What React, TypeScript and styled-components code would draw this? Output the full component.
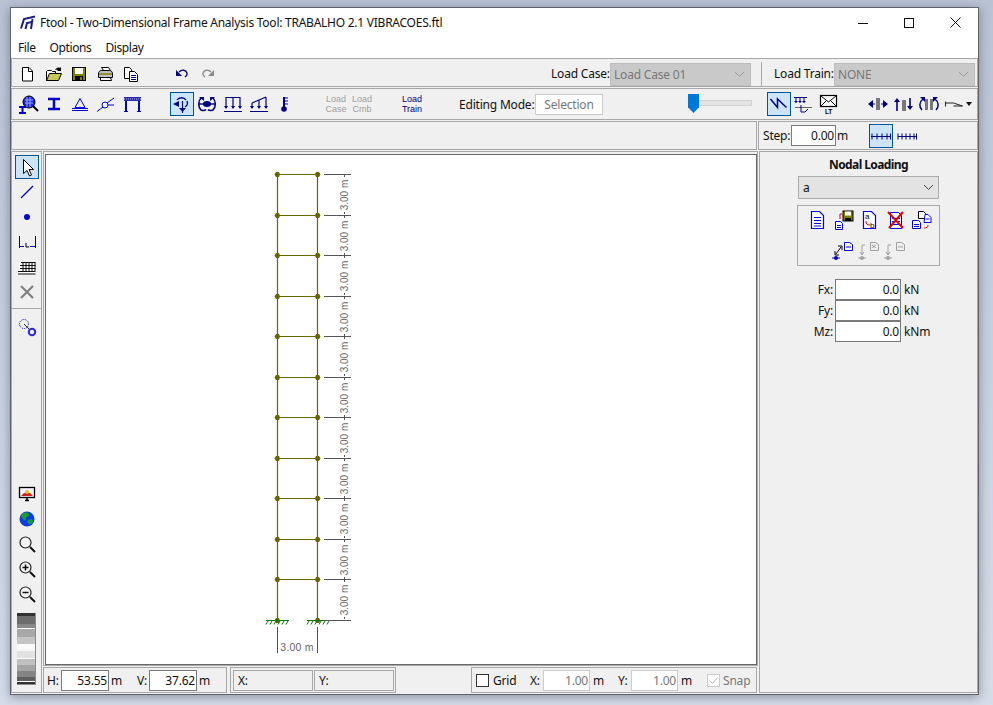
import React from 'react';
import styled, { createGlobalStyle } from 'styled-components';

const NAVY = '#000080';
const BLUE = '#0000e6';
const FRAME = '#666600';
const FLOORS = [174, 215, 255, 296, 336, 377, 417, 458, 498, 539, 579, 620];

const GlobalStyle = createGlobalStyle`
    html, body {
        margin: 0;
        height: 100%;
        background: linear-gradient(#b9c3d4, #d5dde9);
        overflow: hidden;
    }
    body {
        font-family: "Noto Sans", "Open Sans", sans-serif;
        font-size: 12px;
        letter-spacing: -0.2px;
        color: #111;
    }
`;

const WindowFrame = styled.div`
    box-sizing: border-box;
    width: 969px;
    height: 688px;
    margin: 7px 0 0 10px;
    border: 1px solid #5f6368;
    background: #f0f0f0;
    box-shadow: 0 2px 10px rgba(40, 50, 70, 0.45);
    display: flex;
    flex-direction: column;
`;

const TitleBar = styled.div`
    height: 29px;
    background: #fff;
    display: flex;
    align-items: center;
    padding-left: 9px;
    font-size: 12px;
    letter-spacing: -0.25px;
    flex-shrink: 0;
`;

const TitleText = styled.span`
    margin-left: 3px;
    flex: 1;
    white-space: nowrap;
`;

const WinButton = styled.div`
    width: 46px;
    height: 29px;
    display: flex;
    align-items: center;
    justify-content: center;
`;

const MenuBar = styled.div`
    height: 21px;
    background: #fff;
    display: flex;
    align-items: center;
    padding-left: 7px;
    gap: 14px;
    letter-spacing: -0.4px;
    flex-shrink: 0;
`;

const Toolbar = styled.div<{ $h: number; $pt?: number }>`
    box-sizing: border-box;
    height: ${p => p.$h}px;
    margin-bottom: 1px;
    padding-top: ${p => p.$pt ?? 0}px;
    border: 1px solid #a8a8a8;
    display: flex;
    align-items: center;
    flex-shrink: 0;
    white-space: nowrap;
`;

const SplitRow = styled.div`
    display: flex;
    gap: 1px;
    height: 29px;
    margin-bottom: 1px;
    flex-shrink: 0;
`;

const Bar = styled.div<{ $w?: number }>`
    box-sizing: border-box;
    border: 1px solid #a8a8a8;
    display: flex;
    align-items: center;
    ${p => (p.$w ? `width: ${p.$w}px;` : 'flex: 1;')}
`;

const Spacer = styled.div<{ $w: number }>`
    width: ${p => p.$w}px;
    flex-shrink: 0;
`;

const Slot = styled.div<{ $w?: number; $active?: boolean }>`
    box-sizing: border-box;
    width: ${p => p.$w ?? 26}px;
    height: 24px;
    display: flex;
    align-items: center;
    justify-content: center;
    flex-shrink: 0;
    ${p => p.$active && 'background: #cce4f7; border: 1px solid #005499;'}
`;

const Ico = styled.svg.attrs({ viewBox: '0 0 24 24', width: 24, height: 24 })`
    display: block;
    flex-shrink: 0;
    fill: none;
`;

const Label = styled.span<{ $w?: number; $color?: string }>`
    display: inline-block;
    flex-shrink: 0;
    color: ${p => p.$color ?? '#111'};
    ${p => p.$w && `width: ${p.$w}px;`}
`;

const Combo = styled.div`
    box-sizing: border-box;
    width: 141px;
    height: 23px;
    margin-top: 1px;
    background: #c9c9c9;
    border: 1px solid #bdbdbd;
    color: #777;
    display: flex;
    align-items: center;
    justify-content: space-between;
    padding: 0 5px 0 3px;
    flex-shrink: 0;
`;

const VRule = styled.div`
    width: 1px;
    height: 24px;
    background: #a8a8a8;
    flex-shrink: 0;
`;

const SmallCaption = styled.div<{ $on?: boolean }>`
    width: 26px;
    font-family: "Liberation Sans", sans-serif;
    font-size: 9px;
    line-height: 10px;
    letter-spacing: 0;
    text-align: center;
    white-space: normal;
    flex-shrink: 0;
    color: ${p => (p.$on ? NAVY : '#a0a0a0')};
`;

const ModeButton = styled.div`
    box-sizing: border-box;
    width: 68px;
    height: 21px;
    border: 1px solid #ccc;
    background: #fff;
    color: #777;
    display: flex;
    align-items: center;
    justify-content: center;
    flex-shrink: 0;
`;

const Slider = styled.div`
    position: relative;
    width: 64px;
    height: 20px;
    flex-shrink: 0;
`;

const SliderTrack = styled.div`
    position: absolute;
    left: 0;
    right: 0;
    top: 6px;
    height: 4px;
    background: #e3e3e3;
    border: 1px solid #d2d2d2;
`;

const SliderThumb = styled.div`
    position: absolute;
    left: 0;
    top: 0;
    width: 11px;
    height: 19px;
    background: #0078d7;
    clip-path: polygon(0 0, 100% 0, 100% 70%, 50% 100%, 0 70%);
`;

const Field = styled.div<{ $w: number; $off?: boolean }>`
    box-sizing: border-box;
    width: ${p => p.$w}px;
    height: 21px;
    background: #fff;
    border: 1px solid ${p => (p.$off ? '#ccc' : '#7a7a7a')};
    color: ${p => (p.$off ? '#777' : '#111')};
    display: flex;
    align-items: center;
    justify-content: flex-end;
    padding-right: 1px;
    flex-shrink: 0;
`;

const Main = styled.div`
    display: flex;
    gap: 1px;
    height: 542px;
    flex-shrink: 0;
`;

const LeftPanel = styled.div`
    box-sizing: border-box;
    width: 31px;
    border: 1px solid #a8a8a8;
    padding: 3px 2px 7px 3px;
    display: flex;
    flex-direction: column;
    gap: 1px;
`;

const ToolRule = styled.div`
    height: 1px;
    background: #a8a8a8;
    margin: 3px -2px 6px -3px;
`;

const BottomTools = styled.div`
    margin-top: auto;
    display: flex;
    flex-direction: column;
    gap: 1px;
`;

const GrayScale = styled.div`
    box-sizing: border-box;
    width: 19px;
    height: 72px;
    margin: 6px 0 0 2px;
    border-right: 1px solid #8a8a8a;
    border-bottom: 1px solid #8a8a8a;
    background: linear-gradient(
        #333 0 3px, #6d6d6d 3px 11px, #868686 11px 12px, #8a8a8a 12px 15px, #fff 15px 16px,
        #a8a8a8 16px 24px, #c4c4c4 24px 31px, #fafafa 31px 36px, #f6f6f6 36px 38px, #e2e2e2 38px 45px,
        #fff 45px 46px, #c0c0c0 46px 52px, #a4a4a4 52px 58px, #848484 58px 64px, #606060 64px 68px,
        #fff 68px 69px, #333 69px 72px
    );
`;

const CenterColumn = styled.div`
    width: 715px;
    display: flex;
    flex-direction: column;
    gap: 1px;
    flex-shrink: 0;
`;

const CanvasPanel = styled.div`
    box-sizing: border-box;
    height: 515px;
    border: 1px solid #a8a8a8;
    padding: 2px 0 0 1px;
    flex-shrink: 0;
`;

const Canvas = styled.div`
    box-sizing: border-box;
    width: 712px;
    height: 511px;
    border: 1px solid #696969;
    background: #fff;
    overflow: hidden;
`;

const StatusRow = styled.div`
    display: flex;
    height: 26px;
`;

const StatusPanel = styled.div<{ $w: number; $ml?: number }>`
    box-sizing: border-box;
    width: ${p => p.$w}px;
    margin-left: ${p => p.$ml ?? 0}px;
    border: 1px solid #a8a8a8;
    display: flex;
    align-items: center;
    flex-shrink: 0;
    white-space: nowrap;
`;

const Readout = styled.div`
    box-sizing: border-box;
    width: 80px;
    height: 21px;
    border: 1px solid #a8a8a8;
    padding-left: 4px;
    display: flex;
    align-items: center;
    flex-shrink: 0;
`;

const CheckBox = styled.div<{ $off?: boolean }>`
    box-sizing: border-box;
    width: 13px;
    height: 13px;
    background: #fff;
    border: 1px solid ${p => (p.$off ? '#ccc' : '#333')};
    display: flex;
    align-items: center;
    justify-content: center;
    flex-shrink: 0;
`;

const RightPanel = styled.div`
    box-sizing: border-box;
    width: 219px;
    border: 1px solid #a8a8a8;
    display: flex;
    flex-direction: column;
    padding: 4px 0 0 37px;
    flex-shrink: 0;
`;

const PanelTitle = styled.div`
    width: 143px;
    text-align: center;
    font-weight: 700;
    letter-spacing: -0.6px;
    line-height: 17px;
`;

const Select = styled.div`
    box-sizing: border-box;
    width: 141px;
    height: 23px;
    margin: 3px 0 0 1px;
    background: #e3e3e3;
    border: 1px solid #acacac;
    display: flex;
    align-items: center;
    justify-content: space-between;
    padding: 0 4px;
`;

const IconGroup = styled.div`
    box-sizing: border-box;
    width: 143px;
    height: 61px;
    margin-top: 6px;
    border: 1px solid #a8a8a8;
    padding: 2px 0 0 6px;
    display: flex;
    flex-direction: column;
    gap: 6px;
`;

const IconRow = styled.div<{ $pad?: number }>`
    display: flex;
    padding-left: ${p => p.$pad ?? 0}px;
`;

const FieldRow = styled.div`
    display: flex;
    align-items: center;
    height: 21px;
`;

const FieldLabel = styled.span`
    width: 38px;
    text-align: right;
    padding-right: 2px;
    box-sizing: border-box;
    flex-shrink: 0;
`;

const FieldGroup = styled.div`
    margin-top: 13px;
`;

const Unit = styled.span`
    margin-left: 3px;
`;

const DimText = styled.text<{ $small?: boolean }>`
    font-family: "Liberation Sans", sans-serif;
    font-size: ${p => (p.$small ? 10 : 10.5)}px;
    letter-spacing: ${p => (p.$small ? 0 : 0.2)}px;
    fill: #666;
    text-anchor: middle;
`;

const Chevron = ({ color }: { color: string }) => (
    <svg width="11" height="7" viewBox="0 0 11 7" fill="none">
        <path d="M1 1l4.5 4.5L10 1" stroke={color} />
    </svg>
);

const Logo = () => (
    <svg width="17" height="15" viewBox="0 0 17 15" fill="none">
        <path d="M1 13.500L4 4 15 1.500" stroke="#1c1c80" strokeWidth="2" />
        <path d="M5.500 14L7 8l6-1.200M11 14L12.500 4" stroke="#1c1c80" strokeWidth="2" />
    </svg>
);

const Icons: Record<string, React.ReactNode> = {
    newDoc: <><path d="M7.5 5.5h6.5l3.5 3.5v10h-10z" fill="#fff" stroke="#000" /><path d="M13.5 5.5v4h4" stroke="#000" /></>,
    open: <><path d="M5.5 18.5v-9l1-1h4l1 1h3v2" fill="#fff" stroke="#000" /><path d="M5.5 18.5l3-7h12l-3 7z" fill="#c8c85a" stroke="#000" /><path d="M14 8c1-2 3-3 5-2l1-1v4h-4l1-1c-1-.5-2 0-3 0z" fill="#000" /></>,
    save: <><rect x="5.5" y="5.5" width="13" height="13" fill="#808000" stroke="#000" /><rect x="8" y="6" width="8" height="6" fill="#fff" /><rect x="8" y="14" width="8" height="5" fill="#000" /><rect x="13" y="15" width="2" height="3" fill="#808000" /></>,
    print: <><path d="M8.5 5.5h7l2 3h-7z" fill="#fff" stroke="#000" /><path d="M5.5 12c0-2 1-3.5 3-3.5h8c2 0 3 1.500 3 3.500v3.500h-14z" fill="#c0c0c0" stroke="#000" /><path d="M6 12h13" stroke="#808000" strokeWidth="1.5" /><path d="M7.500 15.500h10l1 3h-11z" fill="#fff" stroke="#000" /></>,
    copy: <><path d="M5.500 5.500h5l2 2v9h-7z" fill="#fff" stroke="#000" /><path d="M10.500 9.500h5l3 3v7h-8z" fill="#fff" stroke="#000" /><path d="M12 13.500h5M12 15.500h5M12 17.500h5" stroke="#000080" /></>,
    undo: <><path d="M6 8v6h6z" fill="#000080" /><path d="M9 10c3-3 7-2 8 1 .500 2-.500 3-2 4" stroke="#000080" strokeWidth="1.300" /></>,
    redo: <><path d="M18 8v6h-6z" fill="#8a8a8a" /><path d="M15 10c-3-3-7-2-8 1-.500 2 .500 3 2 4" stroke="#8a8a8a" strokeWidth="1.300" /></>,
    section: <><circle cx="13" cy="10" r="6" fill="#2020e0" stroke="#000" /><path d="M9 8h8M9 11h8M11 5v10M14 5v10" stroke="#9ab0ff" /><path d="M17 14l5 5" stroke="#000" strokeWidth="2" /><path d="M3 15h7M3 21h7M6.500 15v6" stroke="#0000c0" strokeWidth="2" /></>,
    beam: <path d="M6 7h12M6 17h12M12 7v10" stroke="#0000c0" strokeWidth="2.500" />,
    support: <><path d="M12 6.500L7 15.500h10z" stroke={BLUE} /><path d="M4 16.500h16M4 18.500h16" stroke={BLUE} /></>,
    hinge: <><circle cx="11" cy="13" r="3" stroke="#0000c0" /><path d="M3 19.500l6-4.500M13 11l7-5M14 13h6" stroke={BLUE} /></>,
    frame: <><rect x="4" y="5" width="17" height="4" fill="#2a2ab0" /><path d="M4 7h17" stroke="#c0c0f0" strokeDasharray="1 1" /><path d="M6 9v10M19 9v10" stroke="#0000c0" strokeWidth="2" /><path d="M4 19.500h4M17 19.500h4" stroke={BLUE} /></>,
    nodal: <><path d="M7 8c2-3 7-3 9 0M17 9c1 3 0 5-2 6" stroke={NAVY} strokeWidth="1.300" /><path d="M12.500 9v12" stroke={NAVY} strokeWidth="1.200" /><path d="M3 12l6-3v6z" fill={NAVY} /><path d="M9 16h7l-3.500 4z" fill={NAVY} /></>,
    moment: <><ellipse cx="12" cy="12" rx="4" ry="3" fill={NAVY} /><path d="M3 12h18" stroke={NAVY} strokeWidth="1.400" /><path d="M6 6c-3 3-3 9 0 12 3 1 4 .5 5-.5M18 6c3 3 3 9 0 12-3 1-4 .5-5-.5" stroke={NAVY} strokeWidth="1.600" /><path d="M4 5h5v4zM20 5h-5v4z" fill={NAVY} /></>,
    distLoad: <><path d="M5 5.500h14M5 5v11M12 5v11M19 5v11" stroke={NAVY} strokeWidth="1.200" /><path d="M3 14h4l-2 3zM10 14h4l-2 3zM17 14h4l-2 3z" fill={NAVY} /><path d="M3 19.500h18" stroke={NAVY} /></>,
    linLoad: <><path d="M5 11l14-6M5 11v5M12 8v8M19 5v11" stroke={NAVY} strokeWidth="1.200" /><path d="M3 14h4l-2 3zM10 14h4l-2 3zM17 14h4l-2 3z" fill={NAVY} /><path d="M3 19.500h18" stroke={NAVY} /></>,
    thermo: <><path d="M11 5v10" stroke={NAVY} strokeWidth="2" /><path d="M12 6h3M12 9h3M12 12h3" stroke={NAVY} /><circle cx="11" cy="17" r="2.800" fill={NAVY} /></>,
    zigzag: <path d="M3.500 7l7 8.500V7l9 8.500" stroke={NAVY} strokeWidth="1.500" />,
    diagram: <><path d="M3 5.500h13M5 5.500v5M9 5.500v5M13 5.500v5" stroke={NAVY} /><path d="M3 9h4l-2 2zM7 9h4l-2 2zM11 9h4l-2 2z" fill={NAVY} /><path d="M4 15.500h17" stroke="#666" /><path d="M10 13v7h4l3-3" stroke={NAVY} /></>,
    mail: <><rect x="4.500" y="3.500" width="16" height="11" fill="#fff" stroke="#000" strokeWidth="1.200" /><path d="M5 4l7.500 6L20 4M5 14l5-5M20 14l-5-5" stroke="#000" /><text x="12.500" y="21.500" textAnchor="middle" fontFamily="Liberation Sans" fontWeight="700" fontSize="6.500" fill="#000">LT</text></>,
    moveH: <><rect x="10" y="6" width="4" height="12" fill="#777" /><path d="M2 12l5-4v8zM22 12l-5-4v8z" fill={NAVY} /><path d="M6 12h3M15 12h3" stroke={NAVY} /></>,
    moveV: <><rect x="10" y="8" width="4" height="11" fill="#777" /><path d="M5 6l-3 4h6zM18 18l-3-4h6z" fill={NAVY} /><path d="M5 9v10M18 6v9" stroke={NAVY} strokeWidth="1.600" /></>,
    rotate: <><rect x="8" y="7" width="3" height="11" fill="#777" /><rect x="13" y="7" width="3" height="11" fill="#777" /><path d="M6 7c-4 3-4 8-1 11M18 7c4 3 4 8 1 11" stroke={NAVY} strokeWidth="1.500" /><path d="M3 5h5v5zM21 5h-5v5z" fill={NAVY} /></>,
    hingeMenu: <><path d="M2.500 9.500v5M2.500 11h8l9 3h-9" stroke="#222" /></>,
    step: <path d="M1 12.500h20M2 9.500v6M7 9.500v6M12 9.500v6M17 9.500v6M20.500 9.500v6" stroke={NAVY} transform="translate(1 0)" />,
    stepAlt: <path d="M3 12.500h18M3 9.500v6M7 9.500v6M11 9.500v6M15 9.500v6M19 9.500v6M21.500 9.500v6" stroke={NAVY} />,
    cursor: <path d="M8.500 4.500v14l3.500-3 2.500 5.500 2-1-2.500-5.500h4.500z" fill="#fff" stroke="#000" />,
    line: <path d="M6 18L18 6" stroke="#0000c0" strokeWidth="1.200" />,
    node: <circle cx="12" cy="12" r="3" fill="#0000d0" />,
    dimension: <><path d="M4.500 6v12M20.500 6v12M4 16.500h5M15 16.500h6" stroke="#0000c0" /><path d="M11 13v4h3" stroke="#000" /></>,
    keyboard: <><path d="M4 8h16v10H4z" fill="#fff" /><path d="M6 7.500h14.500M5 10.500h15.500M5 13.500h15.500M3 16.500h17.500M3 19h17.500" stroke="#111" strokeWidth="1.200" /><path d="M8 7v9M11 7v9M14 7v9M17 7v9M20 7v9" stroke="#111" /></>,
    cross: <path d="M6 6l12 12M18 6L6 18" stroke="#808080" strokeWidth="2.200" />,
    probe: <><circle cx="9" cy="8" r="4.500" stroke="#0000c0" strokeDasharray="1 1" /><path d="M9 8l6 6" stroke="#222" /><circle cx="17" cy="16" r="3.200" stroke="#2a2ad0" strokeWidth="2" /></>,
    monitor: <><rect x="4.500" y="5.500" width="15" height="10" fill="#f4f4ff" stroke="#000" strokeWidth="1.300" /><path d="M6 14l3-3h6l3 3z" fill="#d02020" /><circle cx="12" cy="10" r="2" fill="#f0c020" /><path d="M10 18.500h4M12 16v2" stroke="#000" strokeWidth="1.500" /></>,
    globe: <><circle cx="12" cy="12" r="7.500" fill="#0a3ee0" /><path d="M7 7c3-2 7-2 7 1 0 2-4 1-3 4s-3 1-5-2zM13 13c3-1 5-1 5 1s-2 4-4 3-2-3-1-4z" fill="#1d9a2e" /></>,
    zoom: <><circle cx="10.500" cy="10.500" r="5.500" fill="#f4f4f4" stroke="#222" strokeWidth="1.200" /><path d="M15 15l5 5" stroke="#111" strokeWidth="2" /></>,
    zoomIn: <><circle cx="10.500" cy="10.500" r="5.500" fill="#f4f4f4" stroke="#222" strokeWidth="1.200" /><path d="M15 15l5 5" stroke="#111" strokeWidth="2" /><path d="M7.500 10.500h6M10.500 7.500v6" stroke="#111" strokeWidth="1.500" /></>,
    zoomOut: <><circle cx="10.500" cy="10.500" r="5.500" fill="#f4f4f4" stroke="#222" strokeWidth="1.200" /><path d="M15 15l5 5" stroke="#111" strokeWidth="2" /><path d="M7.500 10.500h6" stroke="#111" strokeWidth="1.500" /></>,
    page: <><path d="M6.500 3.500h8l4 4v13h-12z" fill="#fff" stroke="#0000e0" strokeWidth="1.200" /><path d="M9 9.500h7M9 12.500h7M9 15.500h7M9 18h7" stroke="#0000e0" /></>,
    pageSave: <><rect x="12" y="3" width="10" height="10" fill="#808000" stroke="#000" /><rect x="14" y="3.500" width="6" height="4" fill="#fff" /><rect x="14" y="10" width="6" height="3" fill="#000" /><path d="M4.500 13.500h5l2 2v6h-7z" fill="#fff" stroke="#0000e0" /><path d="M6 17.500h4M6 19.500h4" stroke="#0000e0" /><path d="M9 11V6h2" stroke="#e00000" /></>,
    pageRename: <><path d="M6.500 3.500h8l4 4v13h-12z" fill="#fff" stroke="#0000e0" strokeWidth="1.200" /><text x="8" y="11" fontFamily="Liberation Sans" fontSize="8" fill="#000">a</text><text x="13" y="20" fontFamily="Liberation Sans" fontSize="8" fill="#000">b</text><path d="M9 13c0 3 1 4 4 4" stroke="#e00000" /></>,
    pageDelete: <><path d="M7.500 4.500h8l3 3v13h-11z" fill="#fff" stroke="#0000e0" /><path d="M9 10.500h8M9 13.500h8M9 16.500h8" stroke="#0000e0" /><path d="M5 4l15 16M20 4L6 20" stroke="#e00000" strokeWidth="2" /></>,
    pageCopy: <><path d="M9.500 3.500h5l2 2v5h-7z" fill="#fff" stroke="#000" /><path d="M16 6.500h3l3 3v5h-7z" fill="#fff" stroke="#0000e0" /><path d="M3.500 12.500h6l2 2v6h-8z" fill="#fff" stroke="#0000e0" /><path d="M5 16.500h5M5 18.500h5M16.500 11h4" stroke="#0000e0" /><path d="M19 17c0 2-1 3-4 3" stroke="#e00000" /></>,
    apply: <><path d="M13.500 4.500h5l3 2v6h-8z" fill="#fff" stroke="#0000e0" /><path d="M15 9h5" stroke="#0000e0" /><path d="M5 16l5-7M4 13v4h4M7 8h4v4" stroke="#000" /><circle cx="5" cy="20" r="2" fill="#0000c0" /><path d="M1 20h8" stroke="#0000c0" /></>,
    applyOff: <><path d="M13.500 4.500h5l3 2v6h-8z" fill="#f0f0f0" stroke="#a0a0a0" /><path d="M15 7l4 3M19 7l-4 3" stroke="#a0a0a0" /><path d="M8 7h-3v10" stroke="#a0a0a0" /><path d="M3 14l2 3 2-3" stroke="#a0a0a0" /><circle cx="5" cy="20" r="2" fill="#a0a0a0" /><path d="M1 20h8" stroke="#a0a0a0" /></>,
    pasteOff: <><path d="M13.500 4.500h5l3 2v6h-8z" fill="#f0f0f0" stroke="#a0a0a0" /><path d="M15 9h5" stroke="#a0a0a0" /><path d="M8 7h-3v10" stroke="#a0a0a0" /><path d="M3 14l2 3 2-3" stroke="#a0a0a0" /><circle cx="5" cy="20" r="2" fill="#a0a0a0" /><path d="M1 20h8" stroke="#a0a0a0" /></>,
};

const Tool = ({ name, w, active }: { name: string; w?: number; active?: boolean }) => (
    <Slot $w={w} $active={active}>
        <Ico>{Icons[name]}</Ico>
    </Slot>
);

const StructureDrawing = () => (
    <svg width="710" height="509" viewBox="46 155 710 509">
        {/* columns and beams */}
        <g stroke={FRAME} strokeWidth="1.200" fill="none">
            <path d="M277.500 174V620M317.500 174V620" />
            {FLOORS.slice(0, -1).map(y => <path key={y} d={`M277.500 ${y + 0.5}H317.500`} />)}
        </g>
        <g fill={FRAME}>
            {FLOORS.map(y => (
                <g key={y}>
                    <path d={`M274.500 ${y + 0.5}l1.500-2.500h3l1 2.500-1 2.500h-3z`} />
                    <path d={`M315 ${y + 0.5}l1-2.500h3l1.500 2.500-1.500 2.500h-3z`} />
                </g>
            ))}
        </g>
        {/* supports */}
        <g stroke="#0a7a0a" fill="none">
            <path d="M266 620.500h23M307 620.500h22" />
            {[268, 272, 276, 280, 284, 288, 309, 313, 317, 321, 325, 329].map(x => (
                <path key={x} d={`M${x} 621l-2 3.500`} />
            ))}
        </g>
        {/* vertical dimension */}
        <g stroke="#555" fill="none">
            {FLOORS.map(y => <path key={y} d={`M324 ${y + 0.5}H351`} />)}
            {FLOORS.slice(0, -1).map(y => <path key={y} d={`M344.500 ${y}v3M344.500 ${y + 38}v2`} />)}
        </g>
        {FLOORS.slice(0, -1).map(y => (
            <DimText key={y} $small transform={`translate(347.500 ${y + 21}) rotate(-90)`}>3.00 m</DimText>
        ))}
        {/* horizontal dimension */}
        <path d="M277.500 627v26M317.500 627v26" stroke="#555" fill="none" />
        <DimText x="297" y="651">3.00 m</DimText>
    </svg>
);

const App: React.FC = () => (
    <>
        <GlobalStyle />
        <WindowFrame>
            <TitleBar>
                <Logo />
                <TitleText>Ftool - Two-Dimensional Frame Analysis Tool: TRABALHO 2.1 VIBRACOES.ftl</TitleText>
                <WinButton>
                    <svg width="10" height="10"><path d="M0 5.500h10" stroke="#111" /></svg>
                </WinButton>
                <WinButton>
                    <svg width="10" height="10"><rect x="0.500" y="0.500" width="9" height="9" fill="none" stroke="#111" /></svg>
                </WinButton>
                <WinButton>
                    <svg width="11" height="11"><path d="M0.500 0.500l10 10M10.500 0.500l-10 10" stroke="#111" /></svg>
                </WinButton>
            </TitleBar>
            <MenuBar>
                <span>File</span>
                <span>Options</span>
                <span>Display</span>
            </MenuBar>

            <Toolbar $h={29} $pt={2}>
                <Spacer $w={2} />
                <Tool name="newDoc" />
                <Tool name="open" />
                <Tool name="save" />
                <Tool name="print" />
                <Tool name="copy" />
                <Spacer $w={25} />
                <Tool name="undo" />
                <Tool name="redo" />
                <Spacer $w={330} />
                <Label $w={59}>Load Case:</Label>
                <Combo>
                    Load Case 01
                    <Chevron color="#9a9a9a" />
                </Combo>
                <Spacer $w={10} />
                <VRule />
                <Spacer $w={12} />
                <Label $w={60}>Load Train:</Label>
                <Combo>
                    NONE
                    <Chevron color="#9a9a9a" />
                </Combo>
            </Toolbar>

            <Toolbar $h={32}>
                <Spacer $w={3} />
                <Tool name="section" />
                <Tool name="beam" />
                <Tool name="support" />
                <Tool name="hinge" />
                <Tool name="frame" />
                <Spacer $w={25} />
                <Tool name="nodal" w={24} active />
                <Tool name="moment" />
                <Tool name="distLoad" />
                <Tool name="linLoad" />
                <Tool name="thermo" />
                <Spacer $w={25} />
                <SmallCaption>Load Case</SmallCaption>
                <SmallCaption>Load Cmb</SmallCaption>
                <Spacer $w={24} />
                <SmallCaption $on>Load Train</SmallCaption>
                <Spacer $w={34} />
                <Label $w={76}>Editing Mode:</Label>
                <ModeButton>Selection</ModeButton>
                <Spacer $w={85} />
                <Slider>
                    <SliderTrack />
                    <SliderThumb />
                </Slider>
                <Spacer $w={15} />
                <Tool name="zigzag" w={24} active />
                <Tool name="diagram" w={24} />
                <Tool name="mail" />
                <Spacer $w={24} />
                <Tool name="moveH" />
                <Tool name="moveV" w={25} />
                <Tool name="rotate" w={25} />
                <Spacer $w={3} />
                <Tool name="hingeMenu" w={22} />
                <svg width="6" height="4" viewBox="0 0 6 4"><path d="M0 0h6L3 4z" fill="#111" /></svg>
            </Toolbar>

            <SplitRow>
                <Bar />
                <Bar $w={220}>
                    <Spacer $w={4} />
                    <Label $w={28}>Step:</Label>
                    <Field $w={45}>0.00</Field>
                    <Spacer $w={1} />
                    <Label $w={32}>m</Label>
                    <Tool name="step" w={24} active />
                    <Tool name="stepAlt" w={28} />
                </Bar>
            </SplitRow>

            <Main>
                <LeftPanel>
                    <Tool name="cursor" w={24} active />
                    <Tool name="line" w={24} />
                    <Tool name="node" w={24} />
                    <Tool name="dimension" w={24} />
                    <Tool name="keyboard" w={24} />
                    <Tool name="cross" w={24} />
                    <ToolRule />
                    <Tool name="probe" w={24} />
                    <BottomTools>
                        <Tool name="monitor" w={24} />
                        <Tool name="globe" w={24} />
                        <Tool name="zoom" w={24} />
                        <Tool name="zoomIn" w={24} />
                        <Tool name="zoomOut" w={24} />
                        <GrayScale />
                    </BottomTools>
                </LeftPanel>

                <CenterColumn>
                    <CanvasPanel>
                        <Canvas>
                            <StructureDrawing />
                        </Canvas>
                    </CanvasPanel>
                    <StatusRow>
                        <StatusPanel $w={184}>
                            <Spacer $w={3} />
                            <Label $w={14}>H:</Label>
                            <Field $w={48}>53.55</Field>
                            <Spacer $w={2} />
                            <Label $w={26}>m</Label>
                            <Label $w={12}>V:</Label>
                            <Field $w={48}>37.62</Field>
                            <Spacer $w={2} />
                            <Label>m</Label>
                        </StatusPanel>
                        <StatusPanel $w={166} $ml={3}>
                            <Spacer $w={2} />
                            <Readout>X:</Readout>
                            <Spacer $w={1} />
                            <Readout>Y:</Readout>
                        </StatusPanel>
                        <StatusPanel $w={286} $ml={75}>
                            <Spacer $w={4} />
                            <CheckBox />
                            <Spacer $w={4} />
                            <Label $w={37}>Grid</Label>
                            <Label $w={13}>X:</Label>
                            <Field $w={47} $off>1.00</Field>
                            <Spacer $w={3} />
                            <Label $w={25}>m</Label>
                            <Label $w={13}>Y:</Label>
                            <Field $w={47} $off>1.00</Field>
                            <Spacer $w={3} />
                            <Label $w={26}>m</Label>
                            <CheckBox $off>
                                <svg width="11" height="11" viewBox="0 0 11 11" fill="none">
                                    <path d="M1.500 5.500l3 3 5-6" stroke="#b0b0b0" />
                                </svg>
                            </CheckBox>
                            <Spacer $w={3} />
                            <Label $color="#777">Snap</Label>
                        </StatusPanel>
                    </StatusRow>
                </CenterColumn>

                <RightPanel>
                    <PanelTitle>Nodal Loading</PanelTitle>
                    <Select>
                        a
                        <Chevron color="#444" />
                    </Select>
                    <IconGroup>
                        <IconRow>
                            <Tool name="page" />
                            <Tool name="pageSave" />
                            <Tool name="pageRename" />
                            <Tool name="pageDelete" />
                            <Tool name="pageCopy" />
                        </IconRow>
                        <IconRow $pad={26}>
                            <Tool name="apply" />
                            <Tool name="applyOff" />
                            <Tool name="pasteOff" />
                        </IconRow>
                    </IconGroup>
                    <FieldGroup>
                        <FieldRow>
                            <FieldLabel>Fx:</FieldLabel>
                            <Field $w={66}>0.0</Field>
                            <Unit>kN</Unit>
                        </FieldRow>
                        <FieldRow>
                            <FieldLabel>Fy:</FieldLabel>
                            <Field $w={66}>0.0</Field>
                            <Unit>kN</Unit>
                        </FieldRow>
                        <FieldRow>
                            <FieldLabel>Mz:</FieldLabel>
                            <Field $w={66}>0.0</Field>
                            <Unit>kNm</Unit>
                        </FieldRow>
                    </FieldGroup>
                </RightPanel>
            </Main>
        </WindowFrame>
    </>
);

export default App;
